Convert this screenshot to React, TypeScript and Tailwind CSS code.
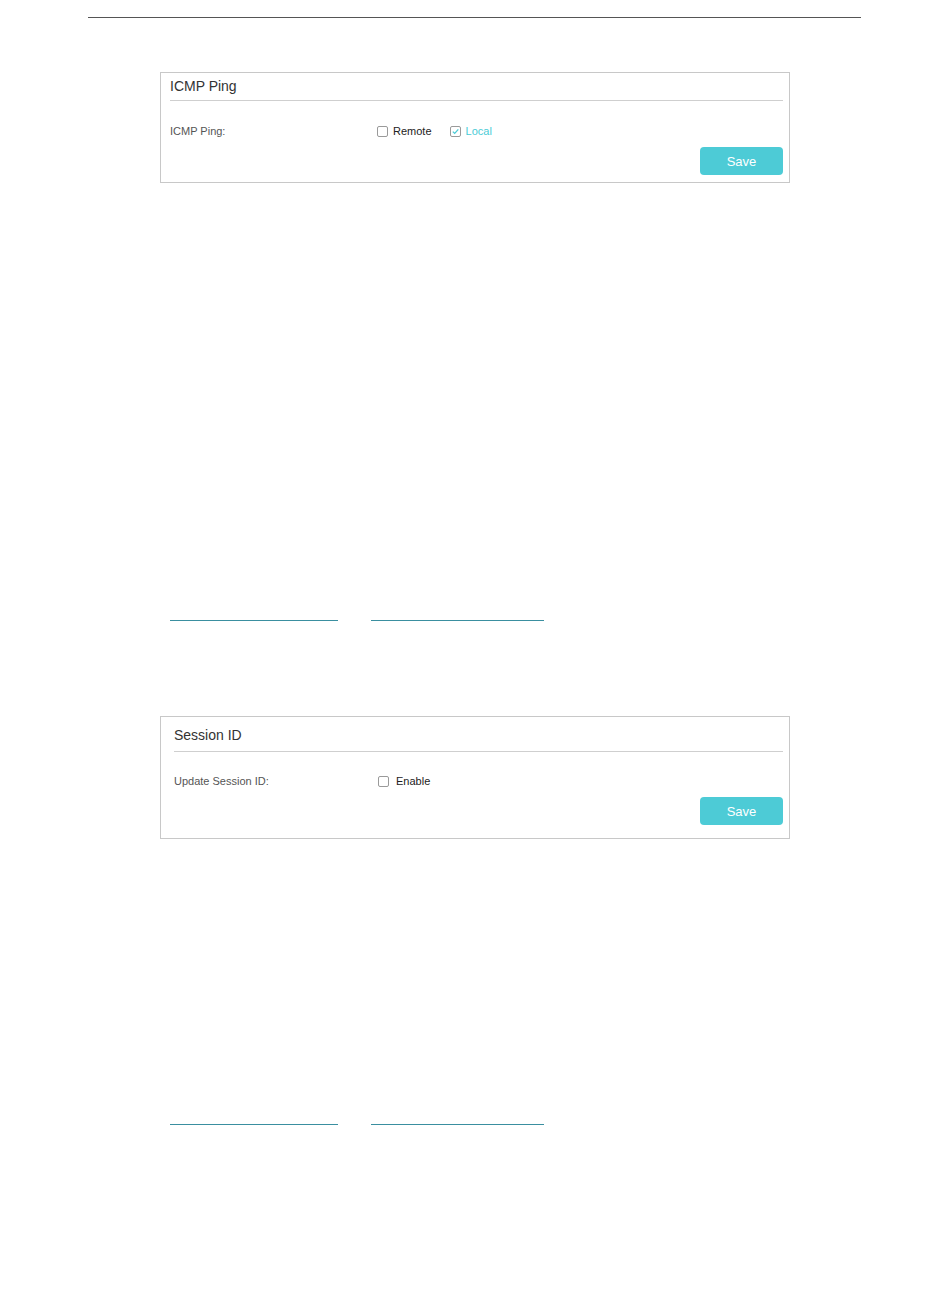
import React from 'react';

const font = { fontFamily: '"Liberation Sans", Arial, sans-serif' };

const Box: React.FC<{ checked?: boolean }> = ({ checked }) => (
  <span className="inline-flex items-center justify-center w-[11px] h-[11px] border border-[#9a9a9a] rounded-[2px] bg-white">
    {checked && (
      <svg width="9" height="9" viewBox="0 0 9 9">
        <path d="M1.8 4.6 L3.7 6.4 L7.3 2.4" fill="none" stroke="#4acbd6" strokeWidth="1.3" />
      </svg>
    )}
  </span>
);

const SaveButton: React.FC = () => (
  <button className="w-[83px] h-[28px] rounded-[4px] bg-[#4dcbd6] text-white text-[13px] leading-none">Save</button>
);

const Underlines: React.FC = () => (
  <div className="flex ml-[170px]">
    <div className="w-[168px] h-px bg-[#3a8fa0]" />
    <div className="w-[173px] h-px bg-[#3a8fa0] ml-[33px]" />
  </div>
);

export default function App() {
  return (
    <div className="w-[950px] h-[1297px] bg-white pt-[17px]" style={font}>
      <div className="ml-[88px] w-[773px] h-px bg-[#555]" />

      {/* ICMP Ping panel */}
      <div className="mt-[54px] ml-[160px] w-[630px] h-[111px] border border-[#c8c8c8] pl-[9px] pr-[6px]">
        <div className="h-[27px] flex items-center text-[14px] text-[#333]">ICMP Ping</div>
        <div className="h-px bg-[#cfcfcf]" />
        <div className="mt-[20px] h-[20px] flex items-center">
          <div className="w-[207px] text-[11px] text-[#555]">ICMP Ping:</div>
          <div className="flex items-center text-[11px]">
            <Box />
            <span className="ml-[5px] text-[#222]">Remote</span>
            <span className="ml-[18px] flex items-center">
              <Box checked />
            </span>
            <span className="ml-[5px] text-[#4acbd6]">Local</span>
          </div>
        </div>
        <div className="mt-[6px] flex justify-end">
          <SaveButton />
        </div>
      </div>

      <div className="mt-[437px]">
        <Underlines />
      </div>

      {/* Session ID panel */}
      <div className="mt-[95px] ml-[160px] w-[630px] h-[123px] border border-[#c8c8c8] pl-[13px] pr-[6px]">
        <div className="h-[34px] flex items-center pt-[2px] text-[14px] text-[#333]">Session ID</div>
        <div className="h-px bg-[#cfcfcf]" />
        <div className="mt-[19px] h-[20px] flex items-center">
          <div className="w-[204px] text-[11px] text-[#555]">Update Session ID:</div>
          <div className="flex items-center text-[11px]">
            <Box />
            <span className="ml-[7px] text-[#222]">Enable</span>
          </div>
        </div>
        <div className="mt-[6px] flex justify-end">
          <SaveButton />
        </div>
      </div>

      <div className="mt-[285px]">
        <Underlines />
      </div>
    </div>
  );
}
